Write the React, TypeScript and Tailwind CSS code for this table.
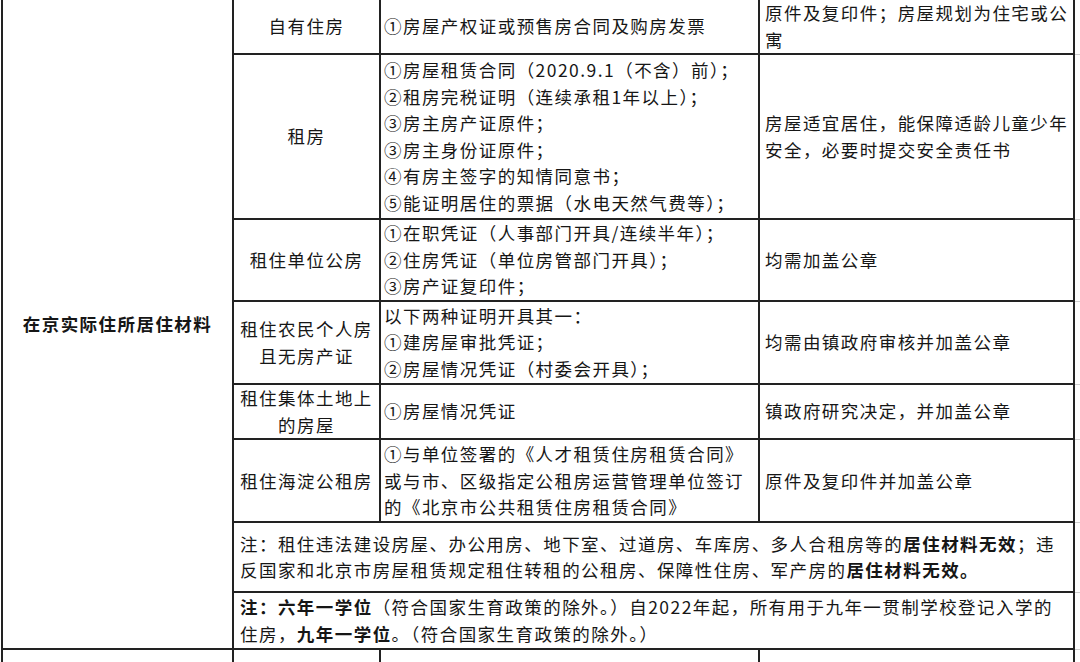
const cell = "border-2 border-[#222222] align-middle";

function Lines({ items }: { items: string[] }) {
  return (
    <>
      {items.map((t, i) => (
        <div key={i}>{t}</div>
      ))}
    </>
  );
}

const rows = [
  {
    name: ["自有住房"],
    docs: ["①房屋产权证或预售房合同及购房发票"],
    note: ["原件及复印件；房屋规划为住宅或公", "寓"],
    h: "h-[52px]",
  },
  {
    name: ["租房"],
    docs: [
      "①房屋租赁合同（2020.9.1（不含）前）；",
      "②租房完税证明（连续承租1年以上）；",
      "③房主房产证原件；",
      "③房主身份证原件；",
      "④有房主签字的知情同意书；",
      "⑤能证明居住的票据（水电天然气费等）；",
    ],
    note: ["房屋适宜居住，能保障适龄儿童少年", "安全，必要时提交安全责任书"],
    h: "h-[165px]",
  },
  {
    name: ["租住单位公房"],
    docs: [
      "①在职凭证（人事部门开具/连续半年）；",
      "②住房凭证（单位房管部门开具）；",
      "③房产证复印件；",
    ],
    note: ["均需加盖公章"],
    h: "h-[82px]",
  },
  {
    name: ["租住农民个人房", "且无房产证"],
    docs: ["以下两种证明开具其一：", "①建房屋审批凭证；", "②房屋情况凭证（村委会开具）；"],
    note: ["均需由镇政府审核并加盖公章"],
    h: "h-[83px]",
  },
  {
    name: ["租住集体土地上", "的房屋"],
    docs: ["①房屋情况凭证"],
    note: ["镇政府研究决定，并加盖公章"],
    h: "h-[55px]",
  },
  {
    name: ["租住海淀公租房"],
    docs: [
      "①与单位签署的《人才租赁住房租赁合同》",
      "或与市、区级指定公租房运营管理单位签订",
      "的《北京市公共租赁住房租赁合同》",
    ],
    note: ["原件及复印件并加盖公章"],
    h: "h-[83px]",
  },
];

const ghost = "border-b border-b-[#cfcfcf] border-t border-t-[#cfcfcf] border-r-0";

export default function App() {
  return (
    <div
      className="h-[662px] w-[1080px] overflow-hidden bg-white text-[#161616]"
      style={{ fontFamily: '"Noto Sans CJK SC", "Noto Sans", sans-serif' }}
    >
      <table className="ml-[1px] w-[1100px] border-collapse table-fixed text-[17.5px] leading-[26.6px] tracking-[1.45px]">
        <colgroup>
          <col className="w-[231px]" />
          <col className="w-[147px]" />
          <col className="w-[379px]" />
          <col className="w-[315px]" />
          <col className="w-[28px]" />
        </colgroup>
        <tbody>
          {rows.map((r, i) => (
            <tr key={i} className={r.h}>
              {i === 0 && (
                <td rowSpan={8} className={`${cell} border-t-0 text-center font-bold`}>
                  在京实际住所居住材料
                </td>
              )}
              <td className={`${cell} ${i === 0 ? "border-t-0" : ""} text-center`}>
                <Lines items={r.name} />
              </td>
              <td className={`${cell} ${i === 0 ? "border-t-0" : ""} pl-[3px]`}>
                <Lines items={r.docs} />
              </td>
              <td className={`${cell} ${i === 0 ? "border-t-0" : ""} pl-[5px]`}>
                <Lines items={r.note} />
              </td>
              <td className={i === 0 ? "border-b border-b-[#cfcfcf]" : ghost}></td>
            </tr>
          ))}
          <tr className="h-[70px]">
            <td colSpan={3} className={`${cell} pl-[6px]`}>
              <div>
                注：租住违法建设房屋、办公用房、地下室、过道房、车库房、多人合租房等的<b>居住材料无效</b>；违
              </div>
              <div>
                反国家和北京市房屋租赁规定租住转租的公租房、保障性住房、军产房的<b>居住材料无效。</b>
              </div>
            </td>
            <td className={ghost}></td>
          </tr>
          <tr className="h-[57px]">
            <td colSpan={3} className={`${cell} pl-[6px]`}>
              <div>
                <b>注：六年一学位</b>（符合国家生育政策的除外。）自2022年起，所有用于九年一贯制学校登记入学的
              </div>
              <div>
                住房，<b>九年一学位</b>。（符合国家生育政策的除外。）
              </div>
            </td>
            <td className={ghost}></td>
          </tr>
          <tr className="h-[40px]">
            <td className={cell}></td>
            <td className={cell}></td>
            <td className={cell}></td>
            <td className={cell}></td>
            <td className={ghost}></td>
          </tr>
        </tbody>
      </table>
    </div>
  );
}
